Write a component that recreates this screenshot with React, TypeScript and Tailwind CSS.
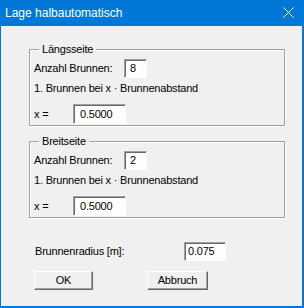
import React from 'react';

const ui = { fontFamily: '"Liberation Sans", Arial, sans-serif' };

function Edit({ value, className }: { value: string; className: string }) {
  return (
    <div
      className={`flex items-center bg-white border border-t-[#a0a0a0] border-l-[#a0a0a0] border-b-white border-r-white shadow-[inset_1px_1px_0_#696969] text-[11px] tracking-[-0.2px] text-black ${className}`}
    >
      {value}
    </div>
  );
}

function Group({ title, count }: { title: string; count: string }) {
  return (
    <div className="relative ml-[28px] w-[256px] border border-[#a0a0a0] shadow-[1px_1px_0_#ffffff,inset_1px_1px_0_#ffffff] pt-[9px] pb-px pl-[4px]">
      <span className="absolute left-[9px] top-[-8px] bg-[#f0f0f0] px-[3px] leading-[14px]">{title}</span>
      <div className="flex items-center h-[19px]">
        <span className="w-[90px]">Anzahl Brunnen:</span>
        <Edit value={count} className="w-[23px] h-[19px] pl-[5px]" />
      </div>
      <div className="mt-[3px] h-[14px] leading-[14px]">1. Brunnen bei x · Brunnenabstand</div>
      <div className="mt-[9px] flex items-center h-[20px]">
        <span className="w-[39px]">x =</span>
        <Edit value="0.5000" className="w-[53px] h-[20px] pl-[6px]" />
      </div>
    </div>
  );
}

function Btn({ label, className }: { label: string; className: string }) {
  return (
    <div
      className={`flex items-center justify-center h-[19px] bg-[#f0f0f0] border border-t-white border-l-white border-b-[#696969] border-r-[#696969] shadow-[inset_-1px_-1px_0_#a0a0a0] ${className}`}
    >
      {label}
    </div>
  );
}

export default function App() {
  return (
    <div className="w-[304px] h-[308px] flex flex-col bg-[#0078d7] overflow-hidden" style={ui}>
      {/* title bar */}
      <div className="h-[26px] flex items-center justify-between pl-[5px] pr-[10px] text-white text-[12px]">
        <span>Lage halbautomatisch</span>
        <svg width="11" height="11" viewBox="0 0 11 11" className="mb-px">
          <path d="M0.5 0.5 L10.5 10.5 M10.5 0.5 L0.5 10.5" stroke="#ffffff" strokeWidth="1" />
        </svg>
      </div>

      {/* client area */}
      <div className="flex-1 ml-px mr-[2px] mb-[2px] bg-[#f0f0f0] text-[11px] tracking-[-0.2px] text-black pt-[23px]">
        <Group title="Längsseite" count="8" />
        <div className="mt-[15px]">
          <Group title="Breitseite" count="2" />
        </div>

        <div className="mt-[24px] flex items-center h-[19px] pl-[34px]">
          <span className="w-[149px]">Brunnenradius [m]:</span>
          <Edit value="0.075" className="w-[42px] h-[19px] pl-[3px]" />
        </div>

        <div className="mt-[10px] flex pl-[33px]">
          <Btn label="OK" className="w-[59px]" />
          <Btn label="Abbruch" className="ml-[54px] w-[61px]" />
        </div>
      </div>
    </div>
  );
}
